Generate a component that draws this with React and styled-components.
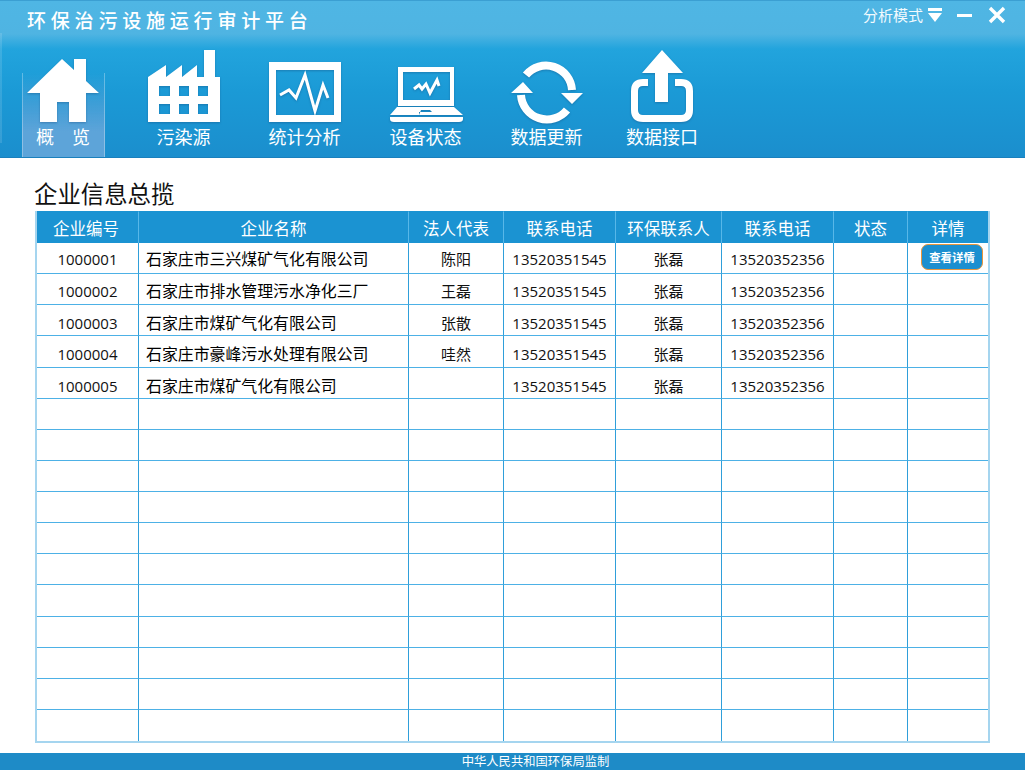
import styled, { createGlobalStyle } from "styled-components";

const NAV_ITEMS = [
  { key: "home", label: "概　览", active: true },
  { key: "factory", label: "污染源" },
  { key: "chart", label: "统计分析" },
  { key: "laptop", label: "设备状态" },
  { key: "sync", label: "数据更新" },
  { key: "upload", label: "数据接口" },
];

const COLUMNS = [
  { title: "企业编号", width: 101 },
  { title: "企业名称", width: 270 },
  { title: "法人代表", width: 95 },
  { title: "联系电话", width: 112 },
  { title: "环保联系人", width: 106 },
  { title: "联系电话", width: 112 },
  { title: "状态", width: 74 },
  { title: "详情", width: 81 },
];

// drop is how far the row's text sits below the middle of the row
const COMPANIES = [
  { id: "1000001", name: "石家庄市三兴煤矿气化有限公司", legal: "陈阳", drop: 2 },
  { id: "1000002", name: "石家庄市排水管理污水净化三厂", legal: "王磊", drop: 3 },
  { id: "1000003", name: "石家庄市煤矿气化有限公司", legal: "张散", drop: 5 },
  { id: "1000004", name: "石家庄市豪峰污水处理有限公司", legal: "哇然", drop: 5 },
  { id: "1000005", name: "石家庄市煤矿气化有限公司", legal: "", drop: 7 },
];

const EMPTY_ROWS = Array.from({ length: 11 }, (_, i) => i);

const NavIcon = ({ name }) => {
  const shapes = {
    home: { x: 22, w: 82, d: "M27 93 62 59 74 70V59H86V81L99 93H86V122H69V102H57V122H40V93Z" },
    factory: {
      x: 144,
      w: 80,
      d: "M148 77 166 65V77L182 65V77L197 65V77H204V50H215V77H220V122H148ZM159 86V96H170V86ZM179 86V96H189V86ZM198 86V96H208V86ZM159 104V114H170V104ZM179 104V114H189V104ZM198 104V114H208V104Z",
    },
    chart: { x: 265, w: 80, d: "M269 62H341V122H269ZM276 70V115H334V70Z" },
    laptop: {
      x: 385,
      w: 80,
      d: "M397 67H453V106H397ZM402 72V100H449V72ZM396 107H453L462 115H418V112H431L429 110H420L418 115H389ZM389 117H462V119Q462 122 458 122H393Q389 122 389 119Z",
    },
    sync: { x: 506, w: 80 },
    upload: { x: 622, w: 80, d: "M642 73 662 50 683 73H668V102H655V73ZM648 79V86H643Q638 86 638 91V110Q638 115 643 115H681Q686 115 686 110V91Q686 86 681 86H675V79H681Q693 79 693 91V110Q693 122 681 122H643Q631 122 631 110V91Q631 79 643 79Z" },
  };
  const { x, w, d } = shapes[name];
  return (
    <IconSvg viewBox={`${x} 48 ${w} 76`} width={w} height={76}>
      {d && <path d={d} fill="#fff" fillRule="evenodd" />}
      {name === "chart" && (
        <polyline points="280,95 289,90 296,98 305,75 315,111 323,85 328,98" fill="none" stroke="#fff" strokeWidth="3" />
      )}
      {name === "laptop" && (
        <polyline points="413,89 418,85 421,89 425,84 429,93 436,80 438,86" fill="none" stroke="#fff" strokeWidth="3" />
      )}
      {name === "sync" && (
        <>
          <path d="M525 75A26 26 0 0 1 571 90M566 110A26 26 0 0 1 520 95" fill="none" stroke="#fff" strokeWidth="8" />
          <path d="M560 93H582L571 104ZM510 93H532L522 82Z" fill="#fff" />
        </>
      )}
    </IconSvg>
  );
};

const App = () => {
  return (
    <Page>
      <GlobalStyle />
      <Header>
        <TitleBar>
          <AppTitle>环保治污设施运行审计平台</AppTitle>
          <WindowControls>
            <ModeLabel>分析模式</ModeLabel>
            <svg width="14" height="14" viewBox="0 0 14 14">
              <path d="M0 0H14V3H0ZM0 5H14L7 14Z" fill="#fff" />
            </svg>
            <MinimizeBar />
            <svg width="18" height="18" viewBox="0 0 18 18">
              <path d="M2 2 16 16M16 2 2 16" stroke="#fff" strokeWidth="3.4" fill="none" />
            </svg>
          </WindowControls>
        </TitleBar>
        <Nav>
          {NAV_ITEMS.map((item) => (
            <NavItem key={item.key} $active={item.active}>
              <NavIcon name={item.key} />
              <NavLabel>{item.label}</NavLabel>
            </NavItem>
          ))}
        </Nav>
      </Header>

      <Content>
        <SectionTitle>企业信息总揽</SectionTitle>
        <Table>
          <colgroup>
            {COLUMNS.map((col, i) => (
              <col key={i} width={col.width} />
            ))}
          </colgroup>
          <thead>
            <tr>
              {COLUMNS.map((col, i) => (
                <HeadCell key={i}>{col.title}</HeadCell>
              ))}
            </tr>
          </thead>
          <tbody>
            {COMPANIES.map((row, i) => (
              <tr key={row.id}>
                <Cell $drop={row.drop}>{row.id}</Cell>
                <NameCell $drop={row.drop}>{row.name}</NameCell>
                <Cell $drop={row.drop}>{row.legal}</Cell>
                <Cell $drop={row.drop}>13520351545</Cell>
                <Cell $drop={row.drop}>张磊</Cell>
                <Cell $drop={row.drop}>13520352356</Cell>
                <Cell />
                <Cell>{i === 0 && <DetailButton>查看详情</DetailButton>}</Cell>
              </tr>
            ))}
            {EMPTY_ROWS.map((i) => (
              <tr key={i}>
                {COLUMNS.map((_, j) => (
                  <Cell key={j} />
                ))}
              </tr>
            ))}
          </tbody>
        </Table>
      </Content>

      <Footer>中华人民共和国环保局监制</Footer>
    </Page>
  );
};

// styled components
const GlobalStyle = createGlobalStyle`
  html, body {
    margin: 0;
    padding: 0;
    background: #fff;
  }
  body {
    font-family: "Open Sans", "Noto Sans CJK SC", sans-serif;
  }
`;

const Page = styled.div`
  width: 1025px;
  height: 770px;
  display: flex;
  flex-direction: column;
  overflow: hidden;
`;

const Header = styled.header`
  height: 158px;
  box-sizing: border-box;
  border-top: 1px solid #3b9fd2;
  border-bottom: 1px solid #1a80bd;
  background: linear-gradient(
    to bottom,
    #4fb6e4 0,
    #4fb4e2 33px,
    #22a4dd 48px,
    #1b9ad6 90px,
    #1b8ecd 158px
  );
`;

const TitleBar = styled.div`
  height: 32px;
  display: flex;
  align-items: flex-start;
  justify-content: space-between;
  padding: 0 19px 0 27px;
`;

const AppTitle = styled.h1`
  margin: 8px 0 0;
  font-family: "Liberation Serif", "Noto Sans CJK SC", serif;
  font-size: 19px;
  line-height: 26px;
  font-weight: 500;
  letter-spacing: 4.8px;
  color: #fff;
`;

const WindowControls = styled.div`
  display: flex;
  align-items: center;
  height: 32px;
  margin-top: -2px;
  gap: 5px;
  & > svg:last-child {
    margin-left: 11px;
  }
`;

const ModeLabel = styled.span`
  font-size: 15px;
  line-height: 30px;
  color: #f2fafe;
`;

const MinimizeBar = styled.span`
  width: 15px;
  height: 3px;
  margin-left: 10px;
  background: #fff;
`;

const Nav = styled.nav`
  display: grid;
  grid-template-columns: 120px 121px 121px 121px 121px 110px;
  height: 124px;
  padding-left: 3px;
  background: linear-gradient(rgba(255, 255, 255, 0.12), rgba(255, 255, 255, 0.12)) no-repeat 0 0 / 2px 110px;
`;

const NavItem = styled.div`
  position: relative;
  display: flex;
  flex-direction: column;
  align-items: center;
  justify-content: flex-end;
  &::before {
    content: "";
    display: ${(p) => (p.$active ? "block" : "none")};
    position: absolute;
    left: 19px;
    right: 18px;
    top: 40px;
    bottom: 0;
    border-left: 1px solid rgba(255, 255, 255, 0.3);
    border-right: 1px solid rgba(255, 255, 255, 0.3);
    background: linear-gradient(to bottom, rgba(120, 180, 225, 0), #5da4d9 70%);
  }
`;

const IconSvg = styled.svg`
  position: relative;
  display: block;
  flex: none;
  filter: drop-shadow(0 1px 1px rgba(20, 60, 110, 0.35));
`;

const NavLabel = styled.span`
  position: relative;
  font-size: 18px;
  line-height: 26px;
  height: 33px;
  color: #fff;
  white-space: pre;
`;

const Content = styled.main`
  padding: 21px 35px 0 35px;
`;

const SectionTitle = styled.h2`
  margin: 0 0 1px -1px;
  font-size: 23.4px;
  line-height: 31px;
  font-weight: 400;
  color: #111;
`;

const Table = styled.table`
  width: 955px;
  height: 532px;
  table-layout: fixed;
  border-collapse: separate;
  border-spacing: 0;
  border-left: 2px solid #a5d5ef;
  border-right: 2px solid #a5d5ef;
  border-bottom: 2px solid #a5d5ef;
`;

const HeadCell = styled.th`
  height: 31px;
  padding: 0;
  background: #1b93d2;
  border-left: 1px solid #58b7e8;
  border-top: 1px solid #1b93d2;
  font-size: 16.5px;
  font-weight: 400;
  color: #fff;
  &:first-child {
    border-left: 0;
    padding-right: 3px;
  }
`;

const Cell = styled.td`
  height: 30.2px;
  padding: ${(p) => p.$drop || 0}px 0 0;
  box-sizing: border-box;
  border-left: 1px solid #2f9fda;
  border-bottom: 1px solid #4db1e6;
  font-size: 15px;
  line-height: 20px;
  color: #111;
  text-align: center;
  &:first-child {
    border-left: 0;
  }
  tr:last-child > & {
    border-bottom: 0;
  }
`;

const NameCell = styled(Cell)`
  padding-left: 7px;
  font-size: 15.9px;
  text-align: left;
  white-space: nowrap;
  color: #000;
`;

const DetailButton = styled.button`
  display: block;
  width: 62px;
  height: 26px;
  margin: -3px 0 0 13px;
  padding: 0;
  border: 1px solid #e8963c;
  border-radius: 7px;
  background: #1b8fd0;
  color: #fff;
  font-family: inherit;
  font-size: 11.4px;
  font-weight: 700;
`;

const Footer = styled.footer`
  margin-top: auto;
  height: 17px;
  padding-left: 46px;
  background: #1e8bc7;
  color: #fff;
  font-size: 12.3px;
  line-height: 17px;
  text-align: center;
`;

export default App;
